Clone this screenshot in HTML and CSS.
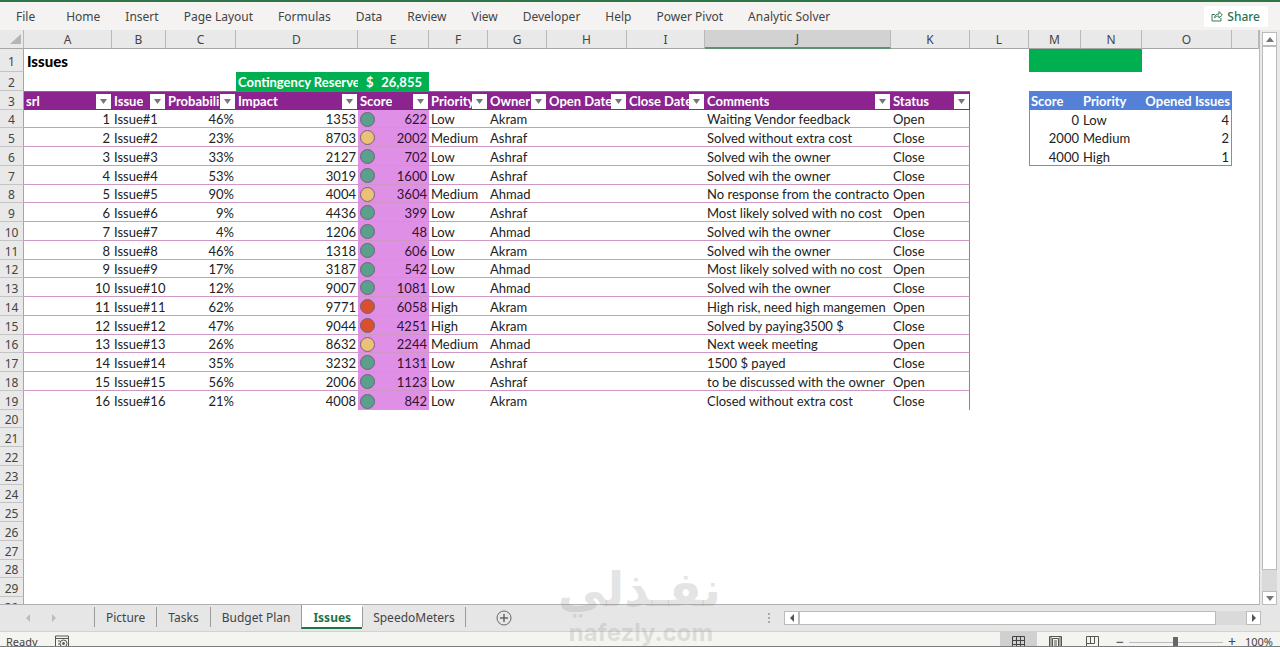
FILE: index.html
```html
<!DOCTYPE html>
<html lang="en">
<head>
<meta charset="utf-8">
<title>Issues</title>
<link rel="stylesheet" href="styles.css">
</head>
<body>

<!-- Ribbon -->
<header class="ribbon">
  <nav class="ribbon-tabs">
    <a href="#" class="file">File</a>
    <a href="#">Home</a>
    <a href="#">Insert</a>
    <a href="#">Page Layout</a>
    <a href="#">Formulas</a>
    <a href="#">Data</a>
    <a href="#">Review</a>
    <a href="#">View</a>
    <a href="#">Developer</a>
    <a href="#">Help</a>
    <a href="#">Power Pivot</a>
    <a href="#">Analytic Solver</a>
  </nav>
  <button class="share">
    <svg width="12" height="12" viewBox="0 0 12 12" fill="none" stroke="#3d7a5a"><path d="M4 4.500H1v6.500h9V8M3.500 8c.3-3 2-4 4.500-4V1.500L11.300 5 8 8V6C6 6 4.500 6.500 3.500 8z"/></svg>
    Share
  </button>
</header>

<!-- Sheet -->
<main class="workspace">
  <div class="sheet">
    <table class="grid">
      <colgroup>
        <col class="c-row"><col class="c-a"><col class="c-b"><col class="c-c"><col class="c-d"><col class="c-e">
        <col class="c-f"><col class="c-g"><col class="c-h"><col class="c-i"><col class="c-j"><col class="c-k">
        <col class="c-l"><col class="c-m"><col class="c-n"><col class="c-o"><col>
      </colgroup>
      <thead>
        <tr>
          <th class="corner"><svg width="13" height="12" viewBox="0 0 13 12"><path d="M12 1v10H1z" fill="#b5b5b5"/></svg></th>
          <th>A</th><th>B</th><th>C</th><th>D</th><th>E</th><th>F</th><th>G</th><th>H</th><th>I</th>
          <th class="selected">J</th><th>K</th><th>L</th><th>M</th><th>N</th><th>O</th><th></th>
        </tr>
      </thead>
      <tbody id="rows"></tbody>
    </table>
  </div>
  <div class="vscroll">
    <button aria-label="Scroll up"><svg width="8" height="5" viewBox="0 0 8 5"><path d="M0 5l4-5 4 5z" fill="#777"/></svg></button>
    <div class="vthumb"></div>
    <div class="vtrack"></div>
    <button aria-label="Scroll down"><svg width="8" height="5" viewBox="0 0 8 5"><path d="M0 0l4 5 4-5z" fill="#777"/></svg></button>
  </div>
</main>

<!-- Sheet tabs -->
<div class="tabbar">
  <div class="tab-nav">
    <button aria-label="Previous sheet"><svg width="4" height="8" viewBox="0 0 4 8"><path d="M4 0v8L0 4z" fill="#bdbdbd"/></svg></button>
    <button aria-label="Next sheet"><svg width="4" height="8" viewBox="0 0 4 8"><path d="M0 0v8l4-4z" fill="#bdbdbd"/></svg></button>
  </div>
  <nav class="tabs">
    <a href="#">Picture</a>
    <a href="#">Tasks</a>
    <a href="#">Budget Plan</a>
    <a href="#" class="active">Issues</a>
    <a href="#">SpeedoMeters</a>
  </nav>
  <button class="add" aria-label="New sheet"><svg width="16" height="16" viewBox="0 0 16 16" fill="none" stroke="#666"><circle cx="8" cy="8" r="7"/><path d="M8 4v8M4 8h8" stroke-width="1.500"/></svg></button>
  <div class="hscroll">
    <span class="grip"></span>
    <button aria-label="Scroll left"><svg width="4" height="8" viewBox="0 0 4 8"><path d="M4 0v8L0 4z" fill="#555"/></svg></button>
    <div class="hthumb"></div>
    <div class="htrack"></div>
    <button aria-label="Scroll right"><svg width="4" height="8" viewBox="0 0 4 8"><path d="M0 0v8l4-4z" fill="#555"/></svg></button>
  </div>
</div>

<!-- Status bar -->
<footer class="status">
  <span class="ready">Ready</span>
  <svg width="14" height="14" viewBox="0 0 14 14" fill="none" stroke="#555"><path d="M.5 13V1h13v12zM.5 3.500h13M3 6h2M3 9h2"/><circle cx="8.500" cy="8.500" r="3.500"/><circle cx="8.500" cy="8.500" r="1" fill="#555"/></svg>
  <div class="views">
    <button class="on" aria-label="Normal"><svg width="13" height="13" viewBox="0 0 13 13" fill="none" stroke="#444"><path d="M.5.5h12v12H.5zM4.500 0v13M8.500 0v13M0 4.500h13M0 8.500h13"/></svg></button>
    <button aria-label="Page layout"><svg width="13" height="13" viewBox="0 0 13 13" fill="none" stroke="#555"><path d="M.5.5h12v12H.5zM3.500 2.500h6v10h-6zM5 5h3M5 7h3M5 9h3M2 0v13M11 0v13"/></svg></button>
    <button aria-label="Page break preview"><svg width="13" height="13" viewBox="0 0 13 13" fill="none" stroke="#555"><path d="M.5 13V.5h12V13M4.500 0v7.500M8.500 0v7.500M0 7.500h8.500"/></svg></button>
  </div>
  <button class="step" aria-label="Zoom out">&minus;</button>
  <input type="range" class="zoom" min="0" max="200" value="100" aria-label="Zoom">
  <button class="step" aria-label="Zoom in">+</button>
  <span class="percent">100%</span>
</footer>

<div class="watermark">
  <div class="wm-ar" lang="ar" dir="rtl">نفـذلي</div>
  <div class="wm-en">nafezly.com</div>
</div>

<script src="script.js"></script>
</body>
</html>
```
FILE: styles.css
```css
* {
  box-sizing: border-box;
}

body {
  margin: 0;
  height: 100vh;
  display: flex;
  flex-direction: column;
  overflow: hidden;
  background: #e6e6e6;
  border-top: 2px solid #2f7548;
  border-bottom: 1px solid #7d7d7d;
  font-family: "Noto Sans", "Open Sans", sans-serif;
  font-size: 12px;
  color: #444;
}

a {
  color: inherit;
  text-decoration: none;
}

button {
  font: inherit;
  color: inherit;
  border: none;
  background: none;
  padding: 0;
  cursor: pointer;
}

svg {
  display: block;
}

/* Ribbon */
.ribbon {
  display: flex;
  justify-content: space-between;
  align-items: center;
  flex: none;
  height: 28px;
  padding: 0 12px 0 16px;
  background: #f4f3f2;
}

.ribbon-tabs {
  display: flex;
  gap: 25px;
  white-space: nowrap;
}

.ribbon-tabs .file {
  margin-right: 6px;
}

.share {
  display: flex;
  align-items: center;
  gap: 4px;
  height: 21px;
  padding: 0 8px 0 7px;
  background: #fff;
  border-radius: 2px;
  font-weight: 500;
  color: #2b7350;
}

/* Sheet */
.workspace {
  flex: 1;
  min-height: 0;
  display: flex;
  background: #e9e9e9;
}

.sheet {
  flex: 1;
  min-width: 0;
  overflow: hidden;
  background: #fff;
  border-right: 1px solid #b8b8b8;
  border-bottom: 1px solid #b0b0b0;
}

.grid {
  width: 100%;
  table-layout: fixed;
  border-collapse: separate;
  border-spacing: 0;
  font-family: Lato, sans-serif;
  font-size: 13px;
  line-height: 15px;
  color: #222;
}

.c-row { width: 24px; }
.c-a { width: 88px; }
.c-b { width: 54px; }
.c-c { width: 70px; }
.c-d { width: 122px; }
.c-e { width: 71px; }
.c-f, .c-g, .c-l { width: 59px; }
.c-h { width: 80px; }
.c-i { width: 78px; }
.c-j { width: 186px; }
.c-k { width: 79px; }
.c-m { width: 52px; }
.c-n { width: 61px; }
.c-o { width: 90px; }

.grid th,
.grid td {
  padding: 2px 2px 0;
  overflow: hidden;
  white-space: nowrap;
  text-align: left;
}

.grid thead th {
  height: 19px;
  padding: 0;
  background: #e9e9e9;
  border-right: 1px solid #b9b9b9;
  border-bottom: 1px solid #a6a6a6;
  font-family: "Noto Sans", sans-serif;
  font-size: 12px;
  font-weight: normal;
  line-height: 17px;
  text-align: center;
  color: #444;
}

.grid thead .corner svg {
  margin-left: 9px;
}

.grid thead .selected {
  background: #d2d2d2;
  border-bottom: 2px solid #5a9273;
}

.grid tbody tr { height: 19px; }
.grid tbody tr:nth-child(4n) { height: 18px; }
.grid tbody tr:first-child { height: 23px; }

.grid tbody .num {
  padding: 2px 0 0;
  background: #e9e9e9;
  border-right: 1px solid #a6a6a6;
  border-bottom: 1px solid #c4c4c4;
  font-family: "Noto Sans", sans-serif;
  font-size: 12px;
  font-weight: normal;
  text-align: center;
  color: #444;
}

.grid .right {
  text-align: right;
}

.grid .title {
  padding-left: 3px;
  font-size: 15px;
  font-weight: 900;
  color: #000;
}

.grid .green {
  background: #00b050;
  color: #fff;
  font-weight: bold;
}

.money {
  display: flex;
  justify-content: space-between;
  padding: 0 5px 0 6px;
}

/* Issues table */
.grid .head {
  padding: 0 0 0 2px;
  background: #8c2490;
  border-top: 1px solid #a552a5;
  color: #fff;
  font-weight: bold;
}

.head-cell {
  display: flex;
  align-items: center;
  justify-content: space-between;
  line-height: 17px;
}

.head-cell span {
  overflow: hidden;
}

.filter {
  flex: none;
  display: flex;
  align-items: center;
  justify-content: center;
  width: 15px;
  height: 15px;
  margin-right: 1px;
  background: #fff;
}

.grid .line {
  border-bottom: 1px solid #cf97c6;
}

.grid .last {
  border-right: 1px solid #b66bad;
}

.grid .score {
  padding-top: 1px;
  background: #e08fe6;
  color: #2c1430;
}

.score-cell {
  display: flex;
  align-items: center;
  justify-content: space-between;
  line-height: 16px;
}

.dot {
  width: 15px;
  height: 15px;
  border: 1px solid #6f6478;
  border-radius: 50%;
}

.dot.low { background: #5ba08c; }
.dot.medium { background: #edc078; }
.dot.high { background: #d9502f; }

/* Lookup table */
.grid .blue {
  background: #5480d8;
  color: #fff;
  font-weight: bold;
}

.grid .box-left { border-left: 1px solid #6e93bd; }
.grid .box-right { border-right: 1px solid #6e93bd; }
.grid .box-bottom { border-bottom: 1px solid #6e93bd; }

/* Scroll bars */
.vscroll {
  flex: none;
  display: flex;
  flex-direction: column;
  width: 20px;
  padding: 2px 3px 0 2px;
}

.vscroll button,
.hscroll button {
  flex: none;
  display: flex;
  align-items: center;
  justify-content: center;
  width: 15px;
  height: 14px;
  background: #fff;
  border: 1px solid #bcbcbc;
}

.vthumb {
  flex: 25;
  background: #fff;
  border: 1px solid #bcbcbc;
}

.vtrack {
  flex: 1;
  background: #dadada;
}

.hscroll {
  display: flex;
  align-items: center;
  width: 40%;
  margin-left: auto;
  padding: 0 19px 0 0;
}

.grip {
  height: 10px;
  margin-right: 14px;
  border-left: 2px dotted #aaa;
}

.hthumb {
  flex: 14;
  height: 14px;
  background: #fff;
  border: 1px solid #bcbcbc;
}

.htrack {
  flex: 1;
  height: 14px;
  background: #dadada;
}

/* Sheet tabs */
.tabbar {
  flex: none;
  display: flex;
  align-items: center;
  height: 27px;
  background: #e6e6e6;
  border-bottom: 1px solid #d2d2d2;
}

.tab-nav {
  display: flex;
  gap: 22px;
  width: 94px;
  padding-left: 26px;
}

.tabs {
  display: flex;
  align-self: flex-start;
  align-items: center;
  height: 24px;
}

.tabs a {
  height: 20px;
  padding: 0 11px;
  border-left: 1px solid #9b9b9b;
  line-height: 22px;
}

.tabs .active {
  height: 24px;
  background: #fff;
  border-bottom: 2px solid #217346;
  line-height: 26px;
  font-weight: bold;
  color: #217346;
}

.tabs a:last-child {
  padding: 0 10px;
  border-right: 1px solid #9b9b9b;
}

.add {
  margin-left: 30px;
}

/* Status bar, runs past the bottom edge of the window */
.status {
  flex: none;
  display: flex;
  align-items: flex-start;
  height: 14px;
  overflow: hidden;
  padding: 0 7px 0 6px;
  background: #f4f4f1;
  font-size: 11px;
  line-height: 20px;
}

.status > svg {
  margin: 3px 0 0 17px;
}

.views {
  display: flex;
  margin-left: auto;
}

.views button {
  width: 37px;
  height: 20px;
  padding: 3px 12px;
}

.views .on {
  background: #d0d0d0;
}

.step {
  width: 18px;
  font-size: 14px;
  line-height: 19px;
}

.zoom {
  appearance: none;
  width: 94px;
  height: 20px;
  margin: 0;
  background: linear-gradient(#bbb, #bbb) center / 100% 1px no-repeat;
}

.zoom::-webkit-slider-thumb {
  appearance: none;
  width: 5px;
  height: 11px;
  background: #666;
}

.percent {
  margin-left: 4px;
}

/* Watermark */
.watermark {
  position: absolute;
  left: 50%;
  bottom: 0;
  width: 160px;
  margin-left: -79px;
  text-align: center;
  font-weight: bold;
  color: rgba(150, 150, 150, 0.27);
  pointer-events: none;
}

.wm-ar {
  font-family: "DejaVu Sans", sans-serif;
  font-size: 48px;
  line-height: 60px;
  white-space: nowrap;
}

.wm-en {
  font-family: Inter, sans-serif;
  font-size: 24px;
  line-height: 28px;
}
```
FILE: script.js
```js
// srl, issue, probability, impact, score, priority, owner, comments, status
const issues = [
  [1, "Issue#1", "46%", 1353, 622, "Low", "Akram", "Waiting Vendor feedback", "Open"],
  [2, "Issue#2", "23%", 8703, 2002, "Medium", "Ashraf", "Solved without extra cost", "Close"],
  [3, "Issue#3", "33%", 2127, 702, "Low", "Ashraf", "Solved wih the owner", "Close"],
  [4, "Issue#4", "53%", 3019, 1600, "Low", "Ashraf", "Solved wih the owner", "Close"],
  [5, "Issue#5", "90%", 4004, 3604, "Medium", "Ahmad", "No response from the contracto", "Open"],
  [6, "Issue#6", "9%", 4436, 399, "Low", "Ashraf", "Most likely solved with no cost", "Open"],
  [7, "Issue#7", "4%", 1206, 48, "Low", "Ahmad", "Solved wih the owner", "Close"],
  [8, "Issue#8", "46%", 1318, 606, "Low", "Akram", "Solved wih the owner", "Close"],
  [9, "Issue#9", "17%", 3187, 542, "Low", "Ahmad", "Most likely solved with no cost", "Open"],
  [10, "Issue#10", "12%", 9007, 1081, "Low", "Ahmad", "Solved wih the owner", "Close"],
  [11, "Issue#11", "62%", 9771, 6058, "High", "Akram", "High risk, need high mangemen", "Open"],
  [12, "Issue#12", "47%", 9044, 4251, "High", "Akram", "Solved by paying3500 $", "Close"],
  [13, "Issue#13", "26%", 8632, 2244, "Medium", "Ahmad", "Next week meeting", "Open"],
  [14, "Issue#14", "35%", 3232, 1131, "Low", "Ashraf", "1500 $ payed", "Close"],
  [15, "Issue#15", "56%", 2006, 1123, "Low", "Ashraf", "to be discussed with the owner", "Open"],
  [16, "Issue#16", "21%", 4008, 842, "Low", "Akram", "Closed without extra cost", "Close"]
];

const levels = [
  [0, "Low", 4],
  [2000, "Medium", 2],
  [4000, "High", 1]
];

const headers = ["srl", "Issue", "Probabili", "Impact", "Score", "Priority", "Owner",
  "Open Date", "Close Date", "Comments", "Status"];

const td = (text, cls) => `<td class="${cls || ""}">${text}</td>`;
const blank = (n) => "<td></td>".repeat(n);
const arrow = '<svg width="7" height="5" viewBox="0 0 7 5"><path d="M0 0h7L3.500 5z" fill="#777"/></svg>';

function headerRow() {
  const cells = headers.map((h) =>
    `<th class="head"><div class="head-cell"><span>${h}</span><button class="filter" aria-label="Filter ${h}">${arrow}</button></div></th>`);
  return cells.join("") + blank(1) +
    '<th class="blue">Score</th><th class="blue">Priority</th><th class="blue right">Opened Issues</th>' + blank(1);
}

function issueRow(i) {
  const [srl, name, prob, impact, score, priority, owner, comment, status] = issues[i];
  const line = i < issues.length - 1 ? "line" : "";
  const scoreCell = `<div class="score-cell"><span class="dot ${priority.toLowerCase()}"></span>${score}</div>`;
  let html = td(srl, line + " right") + td(name, line) + td(prob, line + " right") +
    td(impact, line + " right") + td(scoreCell, line + " score") + td(priority, line) +
    td(owner, line) + td("", line) + td("", line) + td(comment, line) + td(status, line + " last");

  if (i < levels.length) {
    const bottom = i === levels.length - 1 ? " box-bottom" : "";
    const [from, level, count] = levels[i];
    html += blank(1) + td(from, "right box-left" + bottom) + td(level, bottom) +
      td(count, "right box-right" + bottom) + blank(1);
  } else {
    html += blank(5);
  }
  return html;
}

function rowCells(n) {
  if (n === 1) {
    return td("Issues", "title") + blank(11) + td("", "green") + td("", "green") + blank(2);
  }
  if (n === 2) {
    return blank(3) + td("Contingency Reserve", "green") +
      td('<div class="money"><span>$</span><span>26,855</span></div>', "green") + blank(11);
  }
  if (n === 3) return headerRow();
  if (n < 4 + issues.length) return issueRow(n - 4);
  return blank(16);
}

let rows = "";
for (let n = 1; n <= 30; n++) {
  rows += `<tr><th class="num">${n}</th>${rowCells(n)}</tr>`;
}
document.getElementById("rows").innerHTML = rows;
```
